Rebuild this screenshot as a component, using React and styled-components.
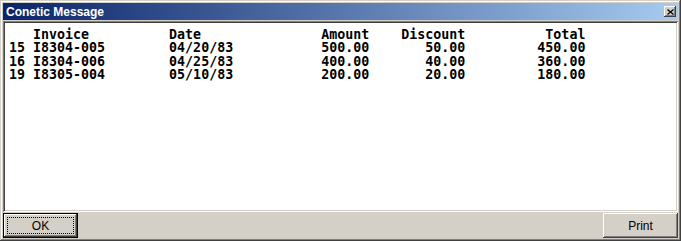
import React from 'react';
import styled, { createGlobalStyle } from 'styled-components';

const GlobalStyle = createGlobalStyle`
  html, body {
    margin: 0;
    padding: 0;
    background: #d4d0c8;
  }
`;

const invoices = [
  { id: '15', invoice: 'I8304-005', date: '04/20/83', amount: '500.00', discount: '50.00', total: '450.00' },
  { id: '16', invoice: 'I8304-006', date: '04/25/83', amount: '400.00', discount: '40.00', total: '360.00' },
  { id: '19', invoice: 'I8305-004', date: '05/10/83', amount: '200.00', discount: '20.00', total: '180.00' },
];

const headerLine =
  '   Invoice'.padEnd(20) + 'Date'.padEnd(19) + 'Amount'.padEnd(10) + 'Discount'.padEnd(18) + 'Total';

const rowLine = (r) =>
  r.id.padEnd(3) +
  r.invoice.padEnd(17) +
  r.date.padEnd(19) +
  r.amount.padStart(6) +
  r.discount.padStart(12) +
  r.total.padStart(15);

const Window = styled.div`
  box-sizing: border-box;
  width: 681px;
  height: 241px;
  padding: 3px;
  display: flex;
  flex-direction: column;
  background: #d4d0c8;
  box-shadow: inset -1px -1px #404040, inset 1px 1px #d4d0c8, inset -2px -2px #808080,
    inset 2px 2px #ffffff;
`;

const TitleBar = styled.div`
  height: 17px;
  display: flex;
  align-items: center;
  justify-content: space-between;
  padding: 0 2px 0 3px;
  background: linear-gradient(to right, #0a246a, #a6caf0);
  color: #ffffff;
  font-family: 'Liberation Sans', Arial, sans-serif;
  font-weight: bold;
  font-size: 12px;
`;

const CloseButton = styled.div`
  box-sizing: border-box;
  width: 12px;
  height: 11px;
  display: flex;
  align-items: center;
  justify-content: center;
  background: #d4d0c8;
  box-shadow: inset -1px -1px #404040, inset 1px 1px #ffffff, inset -2px -2px #808080;
`;

const MessagePanel = styled.div`
  flex: 1;
  margin-top: 1px;
  background: #ffffff;
  padding: 7px 4px 0 6px;
  box-shadow: inset 1px 1px #808080, inset -1px -1px #ffffff, inset 2px 2px #404040,
    inset -2px -2px #d4d0c8;
`;

const Listing = styled.pre`
  margin: 0;
  font-family: 'DejaVu Sans Mono', 'Liberation Mono', monospace;
  font-weight: bold;
  font-size: 13.3px;
  line-height: 13.4px;
  color: #000000;
`;

const ButtonRow = styled.div`
  height: 25px;
  margin-top: 1px;
  display: flex;
  justify-content: space-between;
`;

const Button = styled.div`
  box-sizing: border-box;
  width: 75px;
  height: 25px;
  display: flex;
  align-items: center;
  justify-content: center;
  position: relative;
  background: #d4d0c8;
  font-family: 'Liberation Sans', Arial, sans-serif;
  font-size: 12px;
  color: #000000;
  border: ${({ $default }) => ($default ? '1px solid #000000' : 'none')};
  box-shadow: inset -1px -1px #404040, inset 1px 1px #ffffff, inset -2px -2px #808080,
    inset 2px 2px #d4d0c8;
`;

const FocusRing = styled.span`
  position: absolute;
  inset: 3px;
  border: 1px dotted #000000;
`;

export default function App() {
  return (
    <>
      <GlobalStyle />
      <Window>
        <TitleBar>
          <span>Conetic Message</span>
          <CloseButton>
            <svg width="7" height="6" viewBox="0 0 7 6">
              <path d="M0.5 0.5 L6.5 5.5 M6.5 0.5 L0.5 5.5" stroke="#000" strokeWidth="1.3" />
            </svg>
          </CloseButton>
        </TitleBar>
        <MessagePanel>
          <Listing>{[headerLine, ...invoices.map(rowLine)].join('\n')}</Listing>
        </MessagePanel>
        <ButtonRow>
          <Button $default>
            <FocusRing />
            OK
          </Button>
          <Button>Print</Button>
        </ButtonRow>
      </Window>
    </>
  );
}
